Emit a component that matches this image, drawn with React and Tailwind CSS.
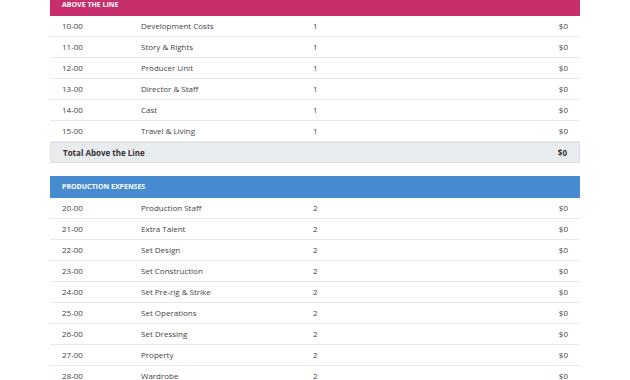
// Budget summary table — two sections with coloured headers
const aboveTheLine = [
  ["10-00", "Development Costs", "1", "$0"],
  ["11-00", "Story & Rights", "1", "$0"],
  ["12-00", "Producer Unit", "1", "$0"],
  ["13-00", "Director & Staff", "1", "$0"],
  ["14-00", "Cast", "1", "$0"],
  ["15-00", "Travel & Living", "1", "$0"],
];

const production = [
  ["20-00", "Production Staff", "2", "$0"],
  ["21-00", "Extra Talent", "2", "$0"],
  ["22-00", "Set Design", "2", "$0"],
  ["23-00", "Set Construction", "2", "$0"],
  ["24-00", "Set Pre-rig & Strike", "2", "$0"],
  ["25-00", "Set Operations", "2", "$0"],
  ["26-00", "Set Dressing", "2", "$0"],
  ["27-00", "Property", "2", "$0"],
  ["28-00", "Wardrobe", "2", "$0"],
];

function Row({ row }) {
  const [code, name, qty, amount] = row;
  return (
    <div className="grid grid-cols-[79px_172px_1fr_auto] items-center h-[21px] px-3 border-b border-[#e8e8e8] text-[8px] text-[#444]">
      <span>{code}</span>
      <span>{name}</span>
      <span>{qty}</span>
      <span>{amount}</span>
    </div>
  );
}

function Section({ title, color, rows }) {
  return (
    <div>
      <div className={`h-[22px] flex items-center px-3 ${color}`}>
        <span className="text-[7px] font-bold uppercase text-white">{title}</span>
      </div>
      {rows.map((r) => (
        <Row key={r[0]} row={r} />
      ))}
    </div>
  );
}

export default function App() {
  return (
    <div
      className="w-[630px] h-[380px] bg-white overflow-hidden"
      style={{ fontFamily: "'Open Sans', 'Noto Sans', sans-serif" }}
    >
      <div className="w-[530px] ml-[50px] mt-[-6px] flex flex-col">
        <Section title="Above the Line" color="bg-[#c82d6c]" rows={aboveTheLine} />
        <div className="flex items-center justify-between h-[21px] px-3 bg-[#e9ecef] border border-[#dde1e5] text-[8px] font-bold text-[#333]">
          <span>Total Above the Line</span>
          <span>$0</span>
        </div>
        <div className="h-[13px]" />
        <Section title="Production Expenses" color="bg-[#478bd0]" rows={production} />
      </div>
    </div>
  );
}
